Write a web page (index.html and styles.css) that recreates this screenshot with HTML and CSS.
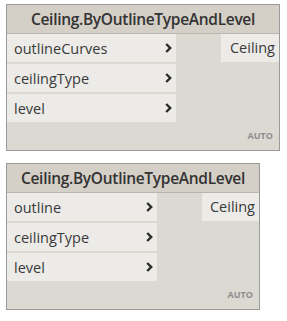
FILE: index.html
```html
<!DOCTYPE html>
<html>
<head>
<meta charset="utf-8">
<link rel="stylesheet" href="styles.css">
</head>
<body>
<div class="page">
  <div class="node node-a">
    <div class="header">Ceiling.ByOutlineTypeAndLevel</div>
    <div class="body">
      <div class="inputs">
        <div class="port"><span>outlineCurves</span><svg class="chev" viewBox="0 0 7 10" width="7" height="10"><path d="M1.2 1 L5.2 5 L1.2 9" fill="none" stroke="#2b2b2b" stroke-width="2.4"/></svg></div>
        <div class="port"><span>ceilingType</span><svg class="chev" viewBox="0 0 7 10" width="7" height="10"><path d="M1.2 1 L5.2 5 L1.2 9" fill="none" stroke="#2b2b2b" stroke-width="2.4"/></svg></div>
        <div class="port"><span>level</span><svg class="chev" viewBox="0 0 7 10" width="7" height="10"><path d="M1.2 1 L5.2 5 L1.2 9" fill="none" stroke="#2b2b2b" stroke-width="2.4"/></svg></div>
      </div>
      <div class="outputs">
        <div class="out">Ceiling</div>
      </div>
    </div>
    <div class="footer">AUTO</div>
  </div>

  <div class="node node-b">
    <div class="header">Ceiling.ByOutlineTypeAndLevel</div>
    <div class="body">
      <div class="inputs">
        <div class="port"><span>outline</span><svg class="chev" viewBox="0 0 7 10" width="7" height="10"><path d="M1.2 1 L5.2 5 L1.2 9" fill="none" stroke="#2b2b2b" stroke-width="2.4"/></svg></div>
        <div class="port"><span>ceilingType</span><svg class="chev" viewBox="0 0 7 10" width="7" height="10"><path d="M1.2 1 L5.2 5 L1.2 9" fill="none" stroke="#2b2b2b" stroke-width="2.4"/></svg></div>
        <div class="port"><span>level</span><svg class="chev" viewBox="0 0 7 10" width="7" height="10"><path d="M1.2 1 L5.2 5 L1.2 9" fill="none" stroke="#2b2b2b" stroke-width="2.4"/></svg></div>
      </div>
      <div class="outputs">
        <div class="out">Ceiling</div>
      </div>
    </div>
    <div class="footer">AUTO</div>
  </div>
</div>
</body>
</html>
```
FILE: styles.css
```css
html, body {
  margin: 0;
  padding: 0;
  background: #ffffff;
}
.page {
  padding: 4px 0 0 6px;
  display: flex;
  flex-direction: column;
  align-items: flex-start;
  gap: 12px;
  font-family: "Open Sans", "DejaVu Sans", sans-serif;
  color: #3a3a3a;
}
.node {
  border: 1px solid #9a9a9a;
  background: #dcd9d3;
  display: flex;
  flex-direction: column;
}
.node-a { width: 272px; }
.node-b { width: 252px; }
.header {
  height: 28px;
  line-height: 28px;
  text-align: center;
  background: #d4cfc7;
  border-bottom: 1px solid #b9b5ae;
  font-size: 15.5px;
  font-weight: 600;
  letter-spacing: -0.3px;
  color: #333333;
}
.body {
  display: flex;
  justify-content: space-between;
  align-items: flex-start;
}
.inputs {
  display: flex;
  flex-direction: column;
  gap: 2px;
}
.node-a .inputs { width: 169px; }
.node-b .inputs { width: 150px; }
.port {
  height: 28px;
  background: #ecebe7;
  display: flex;
  align-items: center;
  justify-content: space-between;
  padding: 0 4px 0 7px;
  font-size: 14.5px;
}
.chev { display: block; }
.out {
  height: 28px;
  line-height: 28px;
  background: #ecebe7;
  padding: 0 4px 0 6px;
  font-size: 14.5px;
  text-align: right;
}
.node-a .out { width: 48px; }
.node-b .out { width: 47px; }
.footer {
  height: 28px;
  line-height: 28px;
  text-align: right;
  padding-right: 6px;
  font-size: 9px;
  font-weight: 700;
  color: #8e8e8e;
}
```
